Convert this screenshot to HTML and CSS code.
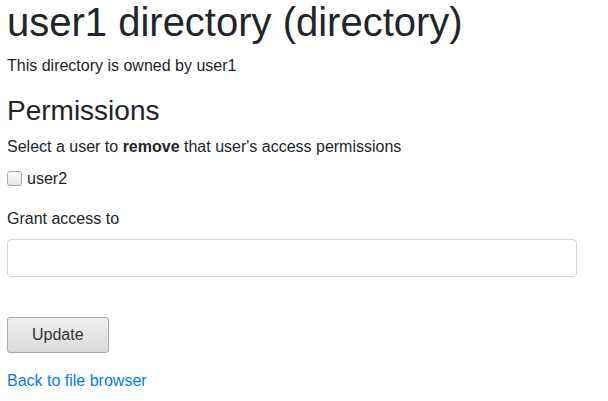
FILE: index.html
```html
<!DOCTYPE html>
<html lang="en">
<head>
<meta charset="utf-8">
<title>user1 directory</title>
<link rel="stylesheet" href="styles.css">
</head>
<body>
<main class="page">
  <h1 class="title">user1 directory (directory)</h1>
  <p class="owner">This directory is owned by user1</p>
  <h2 class="section">Permissions</h2>
  <p class="hint">Select a user to <strong>remove</strong> that user's access permissions</p>
  <form class="perm-form">
    <div class="check">
      <input type="checkbox" id="u2" class="check-input">
      <label for="u2" class="check-label">user2</label>
    </div>
    <div class="group">
      <label for="grant" class="group-label">Grant access to</label>
      <input type="text" id="grant" class="field">
    </div>
    <button type="button" class="btn">Update</button>
  </form>
  <p class="back"><a href="#" class="link">Back to file browser</a></p>
</main>
</body>
</html>
```
FILE: styles.css
```css
html, body {
  margin: 0;
  padding: 0;
  background: #fff;
}
body {
  font-family: "Liberation Sans", Arial, Helvetica, sans-serif;
  font-size: 16px;
  line-height: 24px;
  color: #212529;
}
.page {
  padding: 0 7px;
}
.title {
  font-size: 40px;
  font-weight: 400;
  line-height: 44px;
  margin: 0 0 10px;
}
.owner {
  margin: 0 0 16px;
}
.section {
  font-size: 28px;
  font-weight: 400;
  line-height: 33.6px;
  margin: 0 0 7px;
}
.hint {
  margin: 0;
}
.hint strong {
  font-weight: 700;
}
.perm-form {
  margin: 0;
}
.check {
  display: flex;
  align-items: center;
  gap: 5px;
  margin-top: 8px;
  height: 24px;
}
.check-input {
  -webkit-appearance: none;
  appearance: none;
  box-sizing: border-box;
  width: 15px;
  height: 15px;
  margin: 0;
  border: 1px solid #a8a8a8;
  border-radius: 3px;
  background: linear-gradient(#fbfbfb, #e6e6e6);
}
.group {
  margin-top: 16px;
}
.group-label {
  display: block;
  margin-bottom: 8px;
}
.field {
  display: block;
  box-sizing: border-box;
  width: 570px;
  height: 38px;
  margin: 0;
  padding: 6px 12px;
  font: inherit;
  color: #495057;
  background: #fff;
  border: 1px solid #ced4da;
  border-radius: 4px;
}
.btn {
  display: block;
  box-sizing: border-box;
  margin-top: 40px;
  height: 36px;
  padding: 5px 24px;
  font: inherit;
  line-height: 24px;
  color: #333;
  background: linear-gradient(#f0f0f0, #dadada);
  border: 1px solid #a9a9a9;
  border-radius: 3px;
}
.back {
  margin: 16px 0 0;
}
.link {
  color: #007bff;
  text-decoration: none;
}
```
